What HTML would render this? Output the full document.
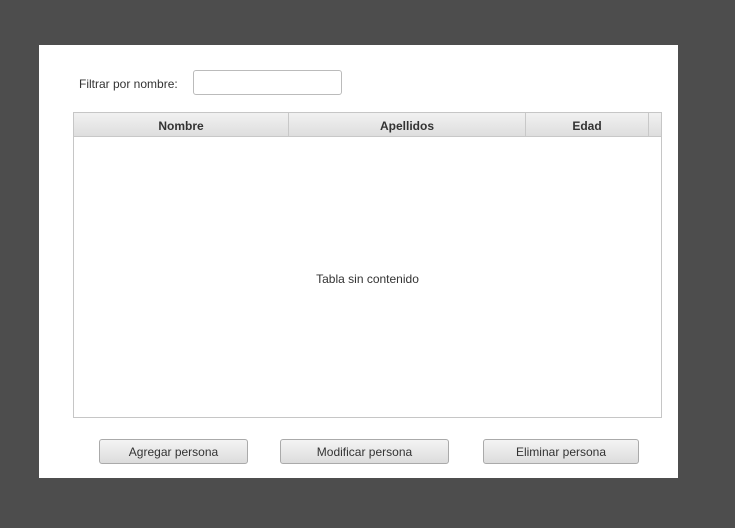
<html><head><style>
body{margin:0;width:735px;height:528px;background:#4d4d4d;font-family:"Liberation Sans",sans-serif;font-size:12px;color:#333;position:relative;overflow:hidden}
.a{position:absolute;box-sizing:border-box}
.p{left:39px;top:45px;width:639px;height:433px;background:#fff}
.hd{top:113px;height:24px;background:linear-gradient(#f1f1f1,#dedede);border-right:1px solid #c8c8c8;border-bottom:1px solid #c8c8c8;font-weight:bold;text-align:center;line-height:26px;color:#333}
.b{top:439px;height:25px;border:1px solid #aaa;border-radius:3px;background:linear-gradient(#f4f4f4,#dcdcdc);text-align:center;line-height:25px;color:#333}
</style></head><body>
<div class="a p"></div>
<div class="a" style="left:79px;top:77px;color:#333">Filtrar por nombre:</div>
<div class="a" style="left:193px;top:70px;width:149px;height:25px;border:1px solid #bbb;border-radius:3px;background:#fff"></div>
<div class="a" style="left:73px;top:112px;width:589px;height:306px;border:1px solid #c6c6c6;background:#fff"></div>
<div class="a hd" style="left:74px;width:215px">Nombre</div>
<div class="a hd" style="left:289px;width:237px">Apellidos</div>
<div class="a hd" style="left:526px;width:123px">Edad</div>
<div class="a hd" style="left:649px;width:12px;border-right:none"></div>
<div class="a" style="left:73px;width:589px;top:272px;text-align:center">Tabla sin contenido</div>
<div class="a b" style="left:99px;width:149px">Agregar persona</div>
<div class="a b" style="left:280px;width:169px">Modificar persona</div>
<div class="a b" style="left:483px;width:156px">Eliminar persona</div>
</body></html>
